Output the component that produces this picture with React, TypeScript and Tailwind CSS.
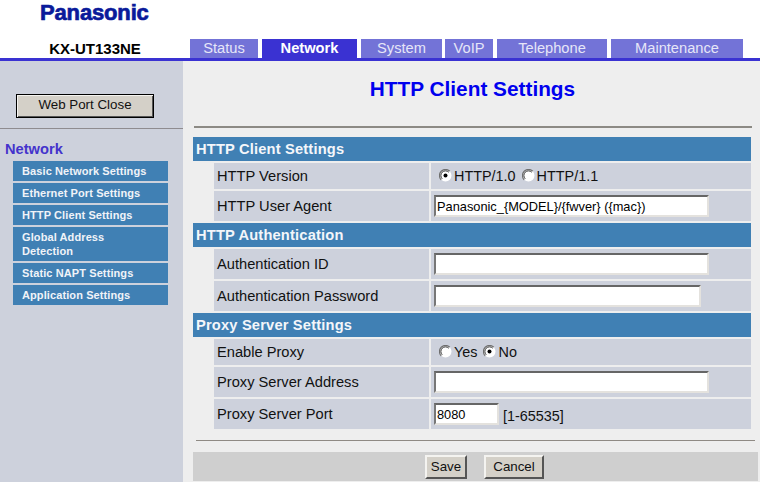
import React from "react";

const tabs = [
  { label: "Status", w: "w-[68px]", ml: "ml-0" },
  { label: "Network", w: "w-[95px]", ml: "ml-[4px]", active: true },
  { label: "System", w: "w-[81px]", ml: "ml-[4px]" },
  { label: "VoIP", w: "w-[48px]", ml: "ml-[3px]" },
  { label: "Telephone", w: "w-[110px]", ml: "ml-[4px]" },
  { label: "Maintenance", w: "w-[132px]", ml: "ml-[4px]" },
];

function Radio({ on }: { on?: boolean }) {
  return (
    <svg width="13" height="13" viewBox="0 0 13 13" className="shrink-0">
      <circle cx="6.5" cy="6.5" r="6" fill="#ffffff" />
      <path d="M2.2 10.8A6 6 0 0 1 10.8 2.2" fill="none" stroke="#6f6f6f" strokeWidth="1.2" />
      <path d="M3.2 9.8A4.6 4.6 0 0 1 9.8 3.2" fill="none" stroke="#333333" strokeWidth="1" />
      {on && <circle cx="6.5" cy="6.5" r="2" fill="#000000" />}
    </svg>
  );
}

function Field({ w, value }: { w: string; value?: string }) {
  return (
    <input
      readOnly
      value={value ?? ""}
      className={`${w} h-[22px] bg-white border-2 border-t-[#666666] border-l-[#777777] border-r-[#e4e2de] border-b-[#e4e2de] px-[1px] text-[12.8px] leading-none text-black outline-none`}
    />
  );
}

function Section({ title }: { title: string }) {
  return (
    <div className="h-[24px] bg-[#4080B4] pl-[3px] text-[14.67px] font-bold leading-[24px] tracking-[0.18px] text-[#f4f6fa]">
      {title}
    </div>
  );
}

function Row({ label, h, children }: { label: string; h: string; children: React.ReactNode }) {
  return (
    <div className={`${h} flex gap-[2px] pl-[21px]`}>
      <div className="w-[215px] bg-[#CDD1DC] pl-[3px] flex items-center text-[14.67px] text-[#111111]">{label}</div>
      <div className="flex-1 bg-[#CDD1DC] pl-[3px] flex items-center text-[14.4px] text-[#111111]">{children}</div>
    </div>
  );
}

const side: React.ReactNode[] = [
  "Basic Network Settings",
  "Ethernet Port Settings",
  "HTTP Client Settings",
  <>Global Address<br />Detection</>,
  "Static NAPT Settings",
  "Application Settings",
];

function Btn({ w, h, children, cls = "" }: { w: string; h: string; children: React.ReactNode; cls?: string }) {
  return (
    <button className={`${w} ${h} ${cls} bg-[#D4D0C8] border-2 border-t-[#f4f3f0] border-l-[#f4f3f0] border-r-[#555555] border-b-[#555555] text-[13.33px] text-[#111111]`}>
      {children}
    </button>
  );
}

export default function App() {
  return (
    <div className="h-[482px] w-[760px] overflow-hidden bg-white font-['Liberation_Sans',Arial,sans-serif]">
      <header className="h-[58px] flex flex-col">
        <div className="h-[39px] pl-[40px] text-[22px] font-bold leading-[26px] tracking-[-0.15px] text-[#0A1A9A] [-webkit-text-stroke:0.7px_#0A1A9A]">
          Panasonic
        </div>
        <div className="flex h-[19px]">
          <div className="w-[190px] text-center text-[15px] font-bold leading-[19px] text-black">KX-UT133NE</div>
          {tabs.map((t) => (
            <div
              key={t.label}
              className={`${t.w} ${t.ml} text-center text-[14.67px] leading-[19px] ${t.active ? "bg-[#3A32D2] font-bold text-white" : "bg-[#7373D7] text-[#e6e6f8]"}`}
            >
              {t.label}
            </div>
          ))}
        </div>
      </header>
      <div className="h-[3px] bg-[#3A32D2]" />
      <div className="flex h-[421px]">
        <aside className="w-[183px] shrink-0 bg-[#CDD1DC] flex flex-col">
          <div className="pt-[31px] pl-[16px]">
            <button className="h-[24px] w-[138px] pb-[2px] bg-[#D4D0C8] border border-black shadow-[inset_1px_1px_0_#f4f3f0,inset_-1px_-1px_0_#555555] text-[13.33px] text-[#111111]">
              Web Port Close
            </button>
          </div>
          <div className="mt-[10px] h-[1px] bg-[#8f8c90]" />
          <div className="pl-[5px] pt-[12px] text-[14.67px] font-bold leading-[17px] text-[#4433CC]">Network</div>
          <nav className="mt-[3px] ml-[13px] w-[155px] flex flex-col gap-[2px]">
            {side.map((s, i) => (
              <div key={i} className={`bg-[#4080B4] pl-[9px] text-[11px] font-bold leading-[14px] tracking-[0.1px] whitespace-nowrap text-[#f0f3f8] py-[3px] ${i === 3 ? "" : "h-[20px]"}`}>
                {s}
              </div>
            ))}
          </nav>
        </aside>
        <main className="flex-1 bg-[#EEEEEE] pl-[10px] flex flex-col">
          <h1 className="h-[65px] pt-[15px] pr-[8px] text-center text-[20.8px] font-bold leading-[25px] text-[#0000EE]">HTTP Client Settings</h1>
          <div className="ml-[1px] mr-[8px] h-[2px] bg-[#8c8a84]" />
          <div className="mt-[9px] mr-[9px] flex flex-col gap-[2px]">
            <Section title="HTTP Client Settings" />
            <Row label="HTTP Version" h="h-[26px]">
              <span className="ml-[5px] flex items-center gap-[2px]">
                <Radio on />
                <span className="pt-[2px]">HTTP/1.0</span>
                <span className="ml-[4px]"><Radio /></span>
                <span className="pt-[2px]">HTTP/1.1</span>
              </span>
            </Row>
            <Row label="HTTP User Agent" h="h-[30px]">
              <Field w="w-[275px]" value="Panasonic_{MODEL}/{fwver} ({mac})" />
            </Row>
            <Section title="HTTP Authentication" />
            <Row label="Authentication ID" h="h-[30px]"><Field w="w-[275px]" /></Row>
            <Row label="Authentication Password" h="h-[30px]"><Field w="w-[267px]" /></Row>
            <Section title="Proxy Server Settings" />
            <Row label="Enable Proxy" h="h-[26px]">
              <span className="ml-[5px] flex items-center gap-[2px]">
                <Radio />
                <span className="pt-[2px]">Yes</span>
                <span className="ml-[4px]"><Radio on /></span>
                <span className="pt-[2px]">No</span>
              </span>
            </Row>
            <Row label="Proxy Server Address" h="h-[30px]"><Field w="w-[275px]" /></Row>
            <Row label="Proxy Server Port" h="h-[30px]">
              <Field w="w-[65px]" value="8080" />
              <span className="ml-[4px] pt-[5px]">[1-65535]</span>
            </Row>
          </div>
          <div className="mt-[11px] ml-[3px] mr-[5px] h-[1px] bg-[#8f8a84]" />
          <div className="mt-[11px] mr-[2px] h-[29px] bg-[#CFCFCF] flex items-start pt-[3px] pl-[232px]">
            <Btn w="w-[42px]" h="h-[24px]">Save</Btn>
            <Btn w="w-[60px]" h="h-[24px]" cls="ml-[17px]">Cancel</Btn>
          </div>
        </main>
      </div>
    </div>
  );
}
